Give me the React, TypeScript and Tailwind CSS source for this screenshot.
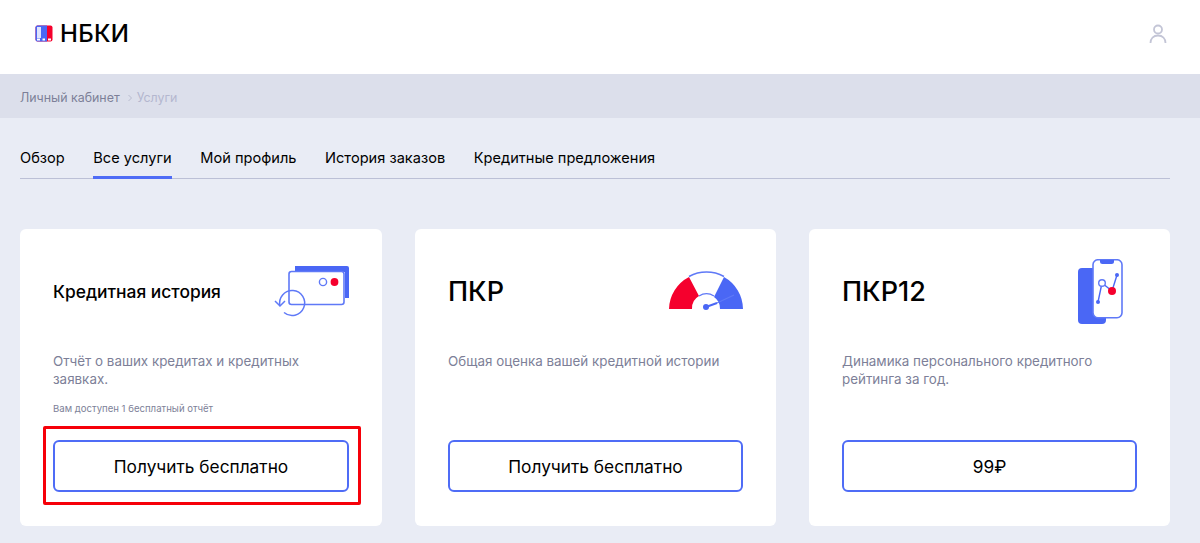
import React from 'react';

const tabs = ['Обзор', 'Все услуги', 'Мой профиль', 'История заказов', 'Кредитные предложения'];

const CardsIcon = () => (
  <svg width="76" height="52" viewBox="0 0 76 52" fill="none" className="-mr-px">
    <path d="M21 0h52a2 2 0 0 1 2 2v30h-4V6H21z" fill="#4a67f5" />
    <rect x="15" y="5.500" width="55" height="33" rx="2.500" fill="white" stroke="#5f79f7" strokeWidth="1.600" />
    <circle cx="49" cy="16" r="3.600" stroke="#5f79f7" strokeWidth="1.400" />
    <circle cx="60.500" cy="16" r="3.900" fill="#f5002d" />
    <path d="M6 40a12.500 12.500 0 1 1 4 6.500" stroke="#5f79f7" strokeWidth="1.500" />
    <path d="M1 35l5 5 5-5" stroke="#5f79f7" strokeWidth="1.500" />
  </svg>
);

const GaugeIcon = () => (
  <svg width="75" height="40" viewBox="0 0 75 40" fill="none" className="-mr-px">
    <path d="M0 38A37 37 0 0 1 20 6L30 25A14 14 0 0 0 23 38z" fill="#f5002d" />
    <path d="M74 38A37 37 0 0 0 55 6L45 26A14 14 0 0 1 51 38z" fill="#4a67f5" />
    <path d="M20 5.500a37 37 0 0 1 35 0" stroke="#5f79f7" strokeWidth="1.500" />
    <path d="M30 25a14 14 0 0 1 15 0" stroke="#5f79f7" strokeWidth="1.300" />
    <circle cx="37" cy="36" r="3" fill="#4a67f5" />
    <path d="M37 36l11-4" stroke="#4a67f5" strokeWidth="2" />
    <path d="M48 32l17-8" stroke="#5f79f7" strokeWidth="1.200" />
  </svg>
);

const PhoneIcon = () => (
  <svg width="46" height="66" viewBox="0 0 46 66" fill="none" className="mr-[13px]">
    <rect x="0" y="9" width="28" height="56" rx="4" fill="#4a67f5" />
    <rect x="15" y="0.750" width="29" height="58" rx="5" fill="white" stroke="#5f79f7" strokeWidth="1.600" />
    <path d="M22 1h14v1.500a2.500 2.500 0 0 1-2.500 2.500h-9a2.500 2.500 0 0 1-2.500-2.500z" fill="#4a67f5" />
    <path d="M20 43l4-19M24 24l10 8M34 32l5-16" stroke="#4a67f5" strokeWidth="1.400" />
    <circle cx="20" cy="43" r="2" fill="#4a67f5" />
    <circle cx="39" cy="16" r="2" fill="#4a67f5" />
    <circle cx="24" cy="24" r="3.300" fill="white" stroke="#5f79f7" strokeWidth="1.400" />
    <circle cx="34" cy="32" r="4" fill="#f5002d" />
  </svg>
);

const Card = ({
  title,
  small,
  icon,
  iconTop,
  text,
  note,
  action,
  highlight,
}: {
  title: string;
  small?: boolean;
  icon: React.ReactNode;
  iconTop: string;
  text: string;
  note?: string;
  action: string;
  highlight?: boolean;
}) => (
  <div className="relative flex h-[297px] flex-col rounded-md bg-white px-[33px]">
    <div className="flex h-[123px] items-start justify-between">
      <h3 className={`mt-[49px] font-medium leading-7 text-black ${small ? 'text-[17.400px]' : 'text-[27px]'}`}>{title}</h3>
      <div className={`flex w-[90px] justify-end ${iconTop}`}>{icon}</div>
    </div>
    <p className="h-[49px] text-[13.400px] leading-[18px] text-[#7d7f98]">{text}</p>
    <p className="h-[39px] pt-[1px] text-[9.600px] leading-[14px] text-[#7d7f98]">{note}</p>
    <div className="flex h-[52px] w-full items-center justify-center rounded-md border-2 border-[#4f6cf6] pt-px text-[17.300px] text-black">
      {action}
    </div>
    {highlight && (
      <div className="absolute left-[23px] top-[197px] h-[79px] w-[318px] rounded-[2px] border-[3px] border-[#f60009]" />
    )}
  </div>
);

export default function App() {
  return (
    <div className="h-[543px] overflow-hidden bg-[#e9ecf5] font-['Inter',sans-serif]">
      <header className="flex h-[74px] items-center justify-between bg-white pb-[7px] pl-[35px] pr-[33px]">
        <div className="flex items-center gap-[7px]">
          <svg width="18" height="17" viewBox="0 0 18 17">
            <rect x="0.500" y="0.500" width="17" height="16" rx="2" fill="#f5002d" />
            <path d="M2.500 0.500H12v16H2.500a2 2 0 0 1-2-2v-12a2 2 0 0 1 2-2z" fill="#4a67f5" />
            <rect x="2" y="2" width="4" height="11" fill="#dfe4fd" />
            <rect x="2" y="13.500" width="3" height="2" fill="white" />
            <rect x="7.500" y="13.500" width="2.500" height="2" fill="white" />
            <rect x="13" y="13.500" width="3" height="2" fill="white" />
          </svg>
          <span className="text-[24px] font-medium leading-none tracking-[0.3px] text-black">НБКИ</span>
        </div>
        <svg width="18" height="20" viewBox="0 0 18 20" fill="none" stroke="#c3c5d6" strokeWidth="1.800">
          <circle cx="9" cy="5.500" r="4" />
          <path d="M1.500 19c0-4.500 3-7.500 7.500-7.500s7.500 3 7.500 7.500" />
        </svg>
      </header>
      <div className="flex h-[44px] items-center bg-[#dcdfeb] px-5 pt-[4px] text-[12.400px]">
        <span className="text-[#7d7f98]">Личный кабинет</span>
        <svg className="ml-[7px] mr-[4px]" width="6" height="8" viewBox="0 0 6 8" fill="none" stroke="#b9bccf" strokeWidth="1">
          <path d="M1.500 1l3 3-3 3" />
        </svg>
        <span className="text-[#b4b7cf]">Услуги</span>
      </div>
      <main className="pl-5 pr-[30px] pt-[24px]">
        <nav className="flex h-[37px] gap-[28.600px] border-b border-[#bcc0d6] text-[14.600px] text-black">
          {tabs.map((tab) => (
            <div
              key={tab}
              className={`h-[37px] pt-[7px] leading-[18px] ${tab === 'Все услуги' ? 'border-b-[3px] border-[#4f6cf6]' : ''}`}
            >
              {tab}
            </div>
          ))}
        </nav>
        <div className="mt-[50px] grid grid-cols-[362px_361px_361px] gap-[33px]">
          <Card
            title="Кредитная история"
            small
            icon={<CardsIcon />}
            iconTop="pt-[37px]"
            text="Отчёт о ваших кредитах и кредитных заявках."
            note="Вам доступен 1 бесплатный отчёт"
            action="Получить бесплатно"
            highlight
          />
          <Card
            title="ПКР"
            icon={<GaugeIcon />}
            iconTop="pt-[42px]"
            text="Общая оценка вашей кредитной истории"
            action="Получить бесплатно"
          />
          <Card
            title="ПКР12"
            icon={<PhoneIcon />}
            iconTop="pt-[30px]"
            text="Динамика персонального кредитного рейтинга за год."
            action="99₽"
          />
        </div>
      </main>
    </div>
  );
}
